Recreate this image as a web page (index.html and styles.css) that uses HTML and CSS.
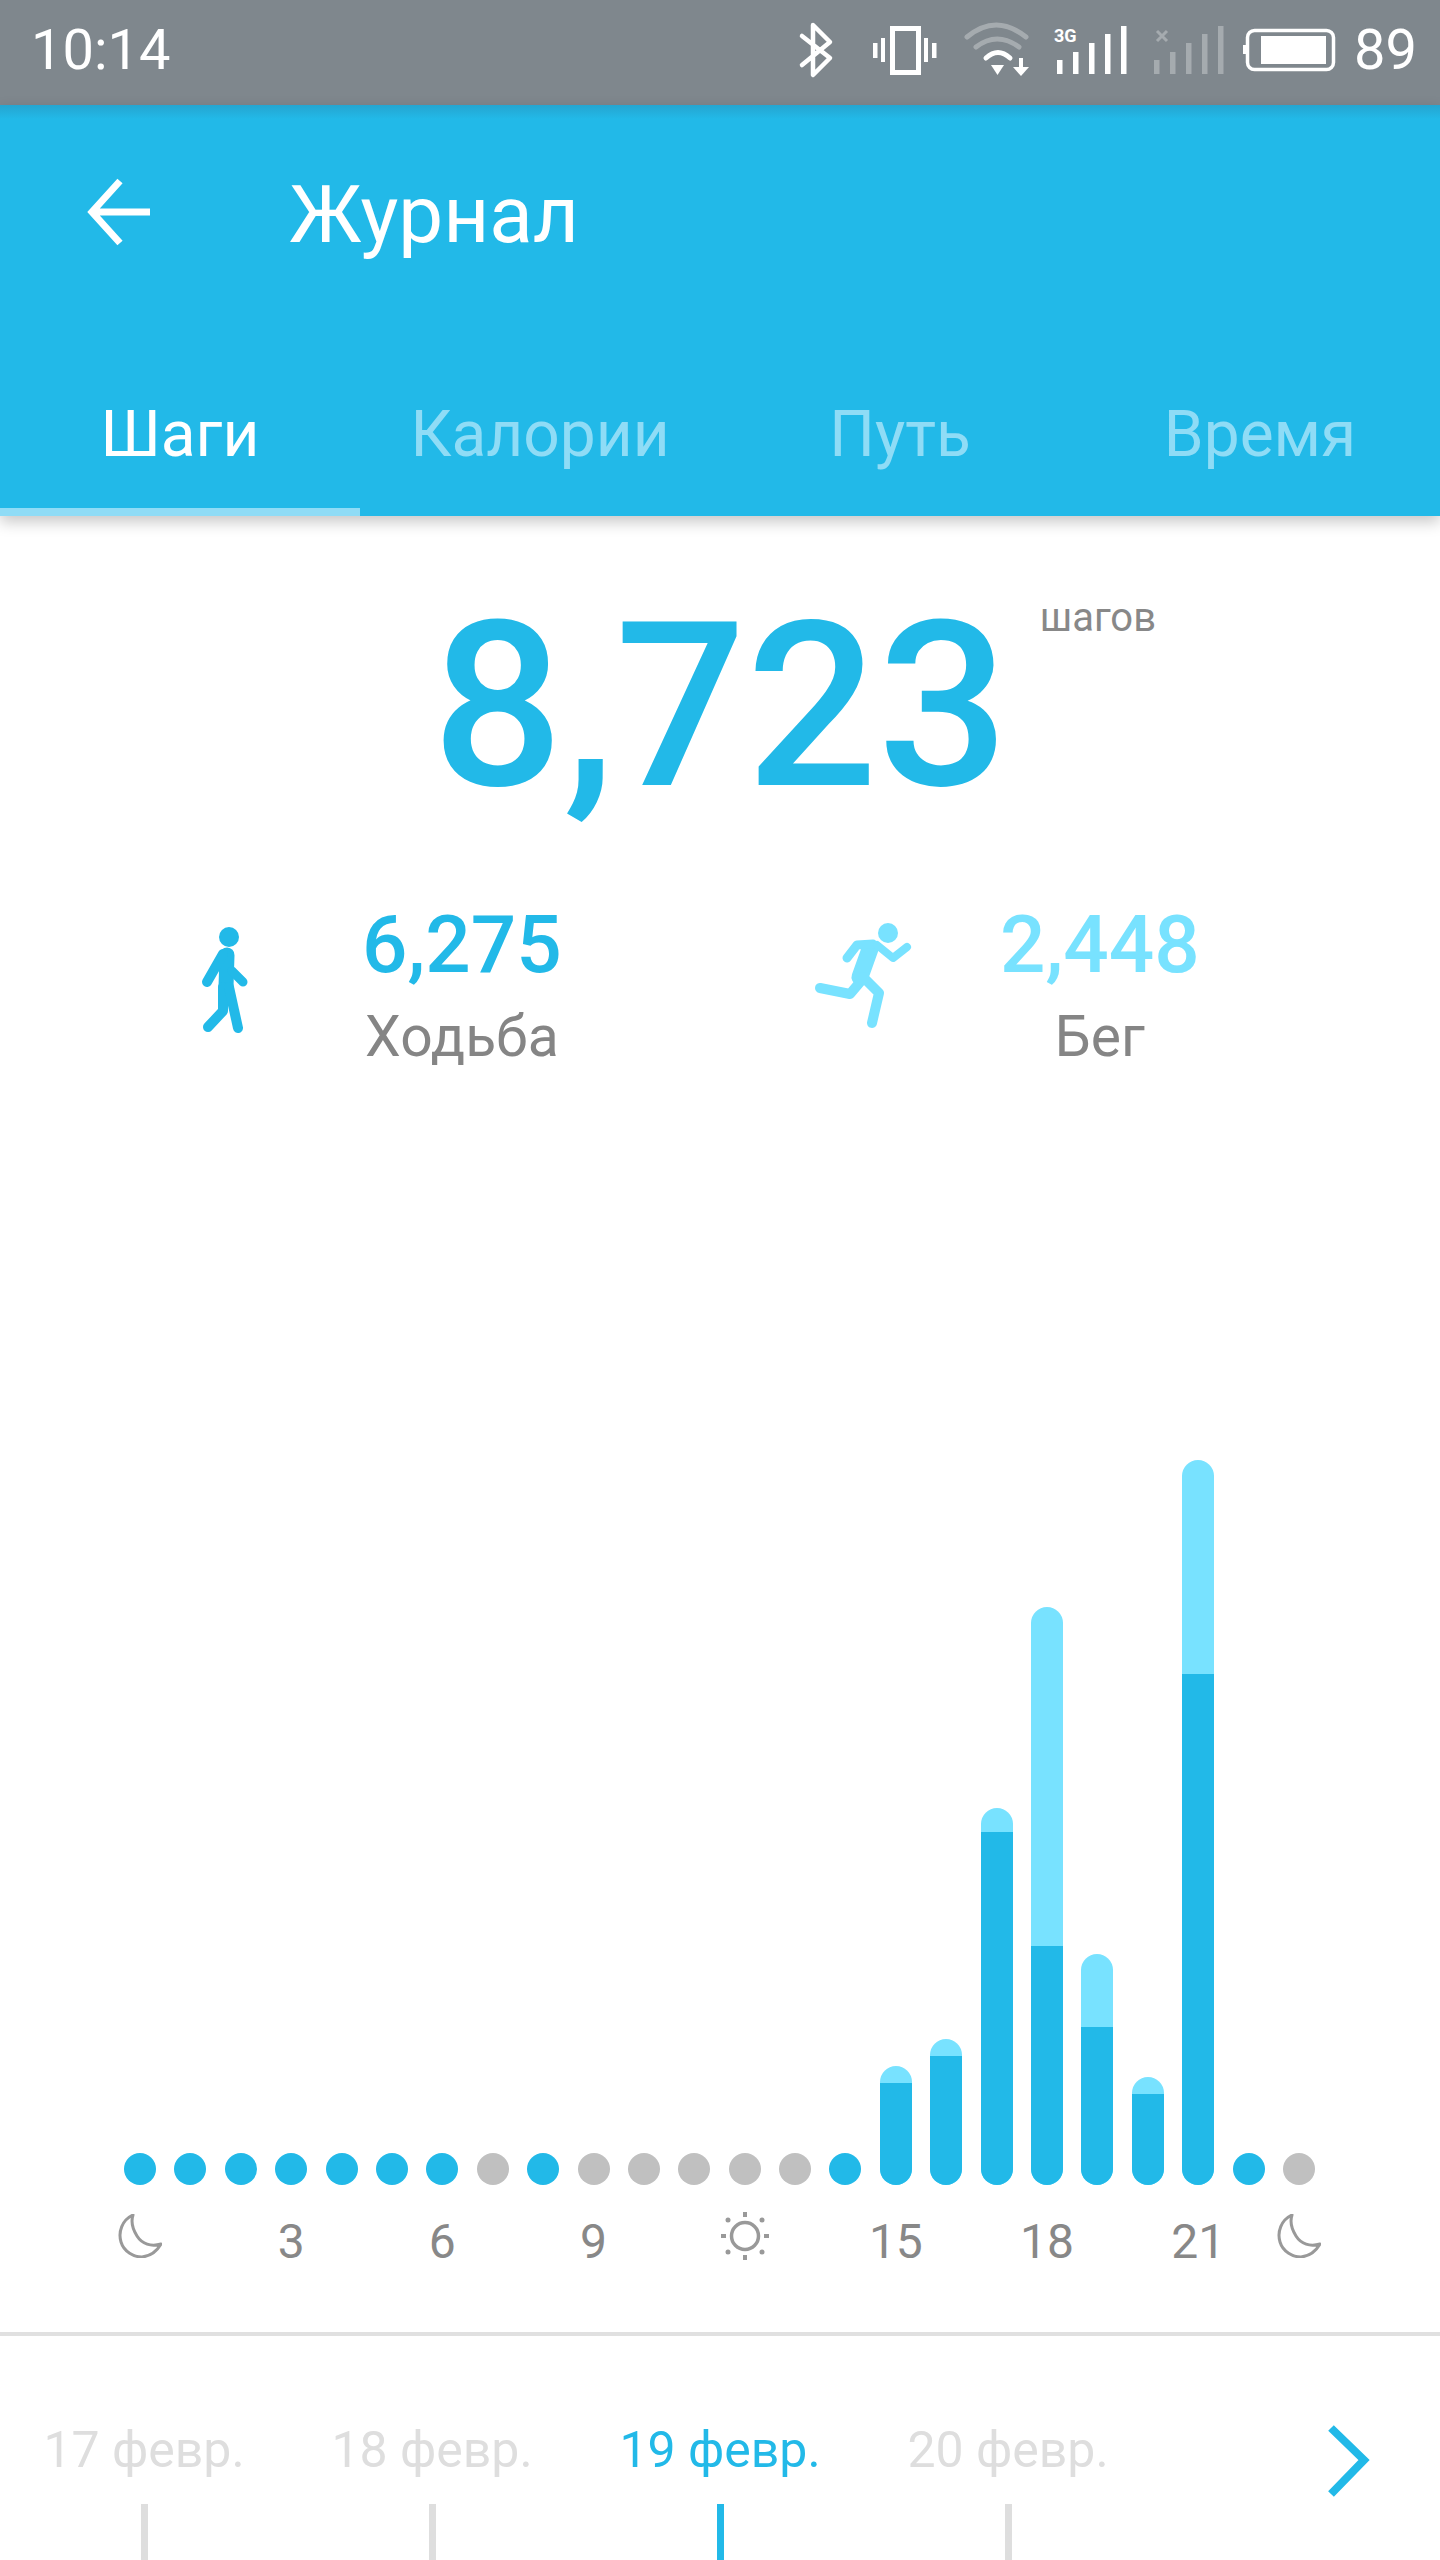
FILE: index.html
```html
<!DOCTYPE html>
<html lang="ru">
<head>
    <meta charset="UTF-8">
    <meta name="viewport" content="width=device-width, initial-scale=1.0">
    <title>Журнал</title>
    <link rel="stylesheet" href="styles.css">
</head>
<body>
    <div class="screen">
        <div class="status-bar">
            <div class="status-time">10:14</div>
            <div class="status-icons">
                <svg class="icon-bt" width="36" height="60" viewBox="0 0 36 60"><polyline points="4,14 32,36 15,53 15,3 32,20 4,43" fill="none" stroke="#fff" stroke-width="4.5" stroke-linecap="round" stroke-linejoin="round"/></svg>
                <svg class="icon-vibrate" width="70" height="60" viewBox="0 0 70 60">
                    <rect x="22.5" y="6.5" width="26" height="44" fill="none" stroke="#fff" stroke-width="5"/>
                    <rect x="3" y="21" width="4.5" height="15" fill="#fff"/>
                    <rect x="11" y="16" width="4" height="24" fill="#fff"/>
                    <rect x="54" y="16" width="4" height="24" fill="#fff"/>
                    <rect x="62" y="21" width="4.5" height="15" fill="#fff"/>
                </svg>
                <svg class="icon-wifi" width="70" height="60" viewBox="0 0 70 60">
                    <path d="M4 15Q33-9 63 15" fill="none" stroke="#fff" stroke-opacity=".3" stroke-width="5" stroke-linecap="round"/>
                    <path d="M13 25Q34 9 56 25" fill="none" stroke="#fff" stroke-opacity=".3" stroke-width="5" stroke-linecap="round"/>
                    <path d="M23 36Q35 25 47 36" fill="none" stroke="#fff" stroke-width="5" stroke-linecap="round"/>
                    <polygon points="28,43 41,43 34.500,53" fill="#fff"/>
                    <rect x="56" y="36" width="4" height="10" fill="#fff"/>
                    <polygon points="50,45 66,45 58,54" fill="#fff"/>
                </svg>
                <svg class="icon-signal" width="76" height="60" viewBox="0 0 76 60">
                    <text class="signal-type" x="2" y="20">3G</text>
                    <rect x="5" y="38" width="5.500" height="14" fill="#fff"/>
                    <rect x="21" y="30" width="5.500" height="22" fill="#fff"/>
                    <rect x="37" y="21" width="5.500" height="31" fill="#fff"/>
                    <rect x="53" y="12" width="5.500" height="40" fill="#fff"/>
                    <rect x="69" y="4" width="5.500" height="48" fill="#fff"/>
                </svg>
                <svg class="icon-signal-off" width="76" height="60" viewBox="0 0 76 60">
                    <g fill="#fff" fill-opacity=".3">
                        <rect x="5" y="38" width="5.500" height="14"/>
                        <rect x="21" y="30" width="5.500" height="22"/>
                        <rect x="37" y="21" width="5.500" height="31"/>
                        <rect x="53" y="12" width="5.500" height="40"/>
                        <rect x="69" y="4" width="5.500" height="48"/>
                    </g>
                    <path d="M8 9L18 19M18 9L8 19" stroke="#fff" stroke-opacity=".3" stroke-width="3"/>
                </svg>
                <svg class="icon-battery" width="94" height="60" viewBox="0 0 94 60">
                    <rect x="5.500" y="8.500" width="86" height="39" rx="7" fill="none" stroke="#fff" stroke-width="3.500"/>
                    <rect x="1" y="23" width="4" height="9" fill="#fff"/>
                    <rect x="19" y="14" width="65" height="28" fill="#fff"/>
                </svg>
                <div class="status-level">89</div>
            </div>
        </div>

        <div class="header">
            <div class="toolbar">
                <svg class="back-arrow" width="70" height="70" viewBox="0 0 70 70"><path d="M66 35H8M36 4L8 35L36 66" fill="none" stroke="#fff" stroke-width="7"/></svg>
                <div class="toolbar-title">Журнал</div>
            </div>
            <div class="tabs">
                <div class="tab active">Шаги</div>
                <div class="tab">Калории</div>
                <div class="tab">Путь</div>
                <div class="tab">Время</div>
            </div>
        </div>

        <div class="summary">
            <div class="total">
                <div class="total-number">8,723</div>
                <div class="total-unit">шагов</div>
            </div>
            <div class="split">
                <div class="split-item">
                    <svg class="walk-icon" width="80" height="125" viewBox="0 0 80 125">
                        <circle cx="39" cy="22" r="10" fill="#22b9e8"/>
                        <g fill="none" stroke="#22b9e8" stroke-linecap="round" stroke-linejoin="round">
                            <path d="M37 40L36 72" stroke-width="15"/>
                            <path d="M33 39L17 67" stroke-width="10"/>
                            <path d="M42 56L53 67" stroke-width="9"/>
                            <path d="M33 72L33 96L18 112" stroke-width="10"/>
                            <path d="M39 72L48 113" stroke-width="10"/>
                        </g>
                    </svg>
                    <div class="split-text">
                        <div class="split-number">6,275</div>
                        <div class="split-label">Ходьба</div>
                    </div>
                </div>
                <div class="split-item run">
                    <svg class="run-icon" width="115" height="120" viewBox="0 0 115 120">
                        <circle cx="83" cy="18" r="10" fill="#78e2ff"/>
                        <g fill="none" stroke="#78e2ff" stroke-linecap="round" stroke-linejoin="round">
                            <path d="M65 34L55 62" stroke-width="17"/>
                            <path d="M42 43L52 30L68 29" stroke-width="9"/>
                            <path d="M72 30L88 43L102 32" stroke-width="8"/>
                            <path d="M56 66L45 79L15 73" stroke-width="10"/>
                            <path d="M58 62L74 78L67 108" stroke-width="10"/>
                        </g>
                    </svg>
                    <div class="split-text">
                        <div class="split-number">2,448</div>
                        <div class="split-label">Бег</div>
                    </div>
                </div>
            </div>
        </div>

        <div class="chart">
            <div class="dot"></div>
            <div class="dot"></div>
            <div class="dot"></div>
            <div class="dot"></div>
            <div class="dot"></div>
            <div class="dot"></div>
            <div class="dot"></div>
            <div class="dot off"></div>
            <div class="dot"></div>
            <div class="dot off"></div>
            <div class="dot off"></div>
            <div class="dot off"></div>
            <div class="dot off"></div>
            <div class="dot off"></div>
            <div class="dot"></div>
            <div class="bar" style="height: 119px"><div class="bar-walk" style="height: 102px"></div></div>
            <div class="bar" style="height: 146px"><div class="bar-walk" style="height: 129px"></div></div>
            <div class="bar" style="height: 377px"><div class="bar-walk" style="height: 353px"></div></div>
            <div class="bar" style="height: 578px"><div class="bar-walk" style="height: 239px"></div></div>
            <div class="bar" style="height: 231px"><div class="bar-walk" style="height: 158px"></div></div>
            <div class="bar" style="height: 108px"><div class="bar-walk" style="height: 91px"></div></div>
            <div class="bar" style="height: 725px"><div class="bar-walk" style="height: 511px"></div></div>
            <div class="dot"></div>
            <div class="dot off"></div>
        </div>

        <div class="hours">
            <div class="hour hour-first"><svg width="44" height="44" viewBox="0 0 44 44"><path d="M15 1C4 6 0 18 3 28C6 38 16 43 24 43C33 42 39 37 43 30C33 33 24 30 19 22C14 14 13 7 15 1Z" fill="none" stroke="#999" stroke-width="3" stroke-linejoin="round"/></svg></div>
            <div class="hour hour-3">3</div>
            <div class="hour hour-6">6</div>
            <div class="hour hour-9">9</div>
            <div class="hour hour-12"><svg width="50" height="50" viewBox="0 0 50 50"><circle cx="25" cy="25" r="13.500" fill="none" stroke="#999" stroke-width="3.500"/><g fill="#999"><rect x="23" y="1" width="4" height="5"/><rect x="23" y="44" width="4" height="5"/><rect x="1" y="23" width="5" height="4"/><rect x="44" y="23" width="5" height="4"/><circle cx="8" cy="9" r="2.500"/><circle cx="42" cy="9" r="2.500"/><circle cx="8" cy="41" r="2.500"/><circle cx="42" cy="41" r="2.500"/></g></svg></div>
            <div class="hour hour-15">15</div>
            <div class="hour hour-18">18</div>
            <div class="hour hour-21">21</div>
            <div class="hour hour-last"><svg width="44" height="44" viewBox="0 0 44 44"><path d="M15 1C4 6 0 18 3 28C6 38 16 43 24 43C33 42 39 37 43 30C33 33 24 30 19 22C14 14 13 7 15 1Z" fill="none" stroke="#999" stroke-width="3" stroke-linejoin="round"/></svg></div>
        </div>

        <div class="dates">
            <div class="date">17 февр.</div>
            <div class="date">18 февр.</div>
            <div class="date active">19 февр.</div>
            <div class="date">20 февр.</div>
            <div class="date-next">
                <svg width="48" height="72" viewBox="0 0 48 72"><path d="M3 3L36 35L3 69" fill="none" stroke="#22b9e8" stroke-width="8"/></svg>
            </div>
        </div>
    </div>
</body>
</html>
```

FILE: styles.css
```css
* {
    margin: 0;
    padding: 0;
    box-sizing: border-box;
}

body {
    font-family: Roboto, "Noto Sans", sans-serif;
    background: #fff;
}

.screen {
    width: 1440px;
    height: 2560px;
    overflow: hidden;
    display: flex;
    flex-direction: column;
}

/* status bar */
.status-bar {
    height: 105px;
    flex-shrink: 0;
    padding: 0 23px 1px 31px;
    background: #7f878d;
    color: #fff;
    display: flex;
    align-items: center;
    justify-content: space-between;
}

.status-time,
.status-level {
    font-size: 56px;
    font-weight: 400;
    line-height: 56px;
}

.status-time {
    margin-top: -4px;
}

.status-icons {
    display: flex;
    align-items: center;
}

.status-level {
    margin: -4px 0 0 18px;
}

.icon-vibrate {
    margin-left: 36px;
}

.icon-wifi {
    margin-left: 23px;
}

.icon-signal {
    margin-left: 19px;
}

.icon-signal-off {
    margin-left: 21px;
}

.icon-battery {
    margin-left: 17px;
}

.signal-type {
    font-family: Roboto, sans-serif;
    font-size: 18px;
    font-weight: 700;
    fill: #fff;
}

/* header */
.header {
    height: 411px;
    flex-shrink: 0;
    position: relative;
    background: linear-gradient(#25a5d0 0, #22b9e8 14px);
    box-shadow: 0 6px 14px rgba(0, 0, 0, 0.22);
    display: flex;
    flex-direction: column;
    justify-content: space-between;
    color: #fff;
}

.toolbar {
    display: flex;
    align-items: center;
    height: 70px;
    margin-top: 72px;
    padding-left: 84px;
}

.toolbar-title {
    margin-left: 135px;
    padding-top: 6px;
    font-size: 80px;
    line-height: 70px;
}

.tabs {
    display: grid;
    grid-template-columns: repeat(4, 360px);
}

.tab {
    height: 118px;
    text-align: center;
    font-size: 64px;
    line-height: 74px;
    color: #8fdcf6;
}

.tab.active {
    color: #fff;
    border-bottom: 8px solid #8fdcf6;
}

/* totals */
.summary {
    height: 944px;
    flex-shrink: 0;
}

.total {
    display: flex;
    align-items: flex-start;
    padding: 80px 0 0 432px;
}

.total-number {
    font-size: 231px;
    font-weight: 500;
    line-height: 220px;
    color: #22b9e8;
}

.total-unit {
    margin: 0 0 0 31px;
    font-size: 40px;
    line-height: 44px;
    color: #888;
}

.split {
    display: flex;
    margin-top: 99px;
    padding-left: 190px;
}

.split-item {
    display: flex;
    width: 615px;
}

.split-text {
    margin: -12px 0 0 92px;
    text-align: center;
}

.run .split-text {
    margin-left: 80px;
}

.split-number {
    font-size: 80px;
    font-weight: 500;
    line-height: 84px;
    color: #22b9e8;
}

.run .split-number {
    color: #78e2ff;
}

.split-label {
    margin-top: 18px;
    font-size: 57px;
    line-height: 64px;
    color: #858585;
}

/* hourly chart */
.chart {
    height: 725px;
    flex-shrink: 0;
    padding-left: 124px;
    display: grid;
    grid-template-columns: repeat(24, 32px);
    column-gap: 18.4px;
    align-items: end;
}

.dot {
    height: 32px;
    border-radius: 50%;
    background: #22b9e8;
}

.dot.off {
    background: #c0c0c0;
}

.bar {
    border-radius: 16px;
    overflow: hidden;
    background: #78e2ff;
    display: flex;
    align-items: flex-end;
}

.bar-walk {
    width: 100%;
    background: #22b9e8;
}

.hours {
    height: 151px;
    flex-shrink: 0;
    padding: 25px 0 0 124px;
    display: grid;
    grid-template-columns: repeat(24, 32px);
    column-gap: 18.4px;
    align-items: start;
    border-bottom: 4px solid #e0e0e0;
}

.hour {
    height: 52px;
    display: flex;
    justify-content: center;
    align-items: center;
    font-size: 48px;
    line-height: 60px;
    padding-top: 12px;
    color: #888;
    white-space: nowrap;
}

.hour svg {
    flex-shrink: 0;
    margin-top: -12px;
}

.hour-first { grid-column: 1; }
.hour-3 { grid-column: 4; }
.hour-6 { grid-column: 7; }
.hour-9 { grid-column: 10; }
.hour-12 { grid-column: 13; }
.hour-15 { grid-column: 16; }
.hour-18 { grid-column: 19; }
.hour-21 { grid-column: 22; }
.hour-last { grid-column: 24; }

/* date picker */
.dates {
    flex: 1;
    display: grid;
    grid-template-columns: repeat(5, 288px);
}

.date {
    text-align: center;
    padding-top: 87px;
    font-size: 50px;
    line-height: 54px;
    color: #dedede;
}

.date::after {
    content: '';
    display: block;
    width: 7px;
    height: 56px;
    margin: 27px auto 0;
    background: #dedede;
}

.date.active {
    color: #22b9e8;
}

.date.active::after {
    background: #22b9e8;
}

.date-next {
    padding: 89px 0 0 176px;
}
```
